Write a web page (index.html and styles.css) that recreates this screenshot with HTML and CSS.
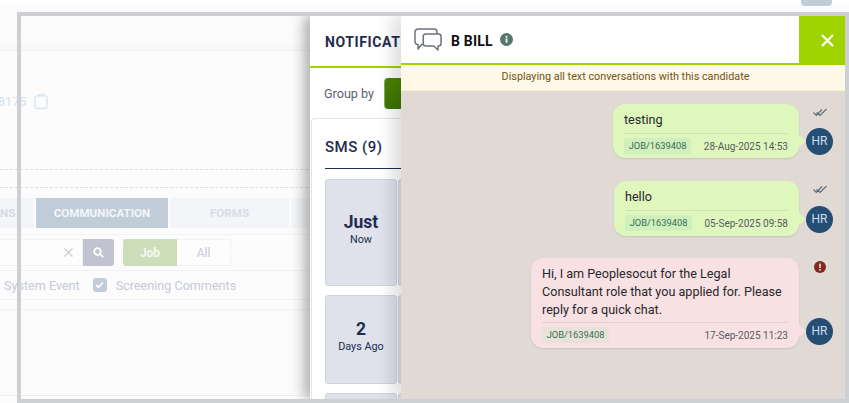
FILE: index.html
```html
<!DOCTYPE html>
<html lang="en">
<head>
<meta charset="utf-8">
<title>Communication</title>
<link rel="stylesheet" href="styles.css">
</head>
<body>
<div class="page">
  <div class="topbar"><span class="topbtn"></span></div>
  <div class="idrow">
    <span class="idnum">8175</span>
    <svg class="clip" width="14" height="15" viewBox="0 0 14 15" fill="none" stroke="#d3e2ee" stroke-width="1.2"><rect x="1" y="2" width="12" height="12.4" rx="1.5"/><path d="M4.5 2V.8h5V2" /></svg>
  </div>
  <div class="dash dash1"></div>
  <div class="dash dash2"></div>
  <div class="tabs">
    <span class="tab tab-first">NS</span>
    <span class="tab tab-active">COMMUNICATION</span>
    <span class="tab tab-forms">FORMS</span>
    <span class="tab tab-rest"></span>
  </div>
  <div class="searchrow">
    <div class="input">
      <svg width="9" height="9" viewBox="0 0 9 9" stroke="#c9cbd1" stroke-width="1.1"><path d="M.5.5l8 8M8.500.5l-8 8"/></svg>
    </div>
    <span class="searchbtn">
      <svg width="11" height="11" viewBox="0 0 11 11" fill="none" stroke="#fff" stroke-width="1.8"><circle cx="4.500" cy="4.500" r="3.300"/><path d="M7 7l3.200 3.200"/></svg>
    </span>
    <span class="seg seg-on">Job</span>
    <span class="seg seg-off">All</span>
  </div>
  <div class="checkrow">
    <span>System Event</span>
    <span class="check">
      <svg width="9" height="8" viewBox="0 0 9 8" fill="none" stroke="#fff" stroke-width="1.600"><path d="M1 4l2.400 2.400L8 1.500"/></svg>
    </span>
    <span>Screening Comments</span>
  </div>
  <div class="blankrow"></div>
</div>

<div class="modal">
  <section class="notif">
    <div class="notif-inner">
      <h2 class="notif-title">NOTIFICATIONS</h2>
      <div class="groupby"><span>Group by</span><span class="groupbtn"></span></div>
      <div class="smscard">
        <h3 class="smstitle">SMS (9)</h3>
        <div class="smslist">
          <div class="dayrow day-tall"><div class="day"><strong>Just</strong><span>Now</span></div><div class="day day-next"></div></div>
          <div class="dayrow day-mid"><div class="day"><strong>2</strong><span>Days Ago</span></div><div class="day day-next"></div></div>
          <div class="dayrow day-low"><div class="day"></div><div class="day day-next"></div></div>
        </div>
      </div>
    </div>
  </section>
  <section class="chat">
    <header class="chathead">
      <svg class="chaticon" width="28" height="26" viewBox="0 0 28 26" fill="none" stroke="#6d7282" stroke-width="1.500" stroke-linejoin="round">
        <path d="M9 16.500H7.500L4 21v-4.500H3.500A2.500 2.500 0 0 1 1 14V4a3 3 0 0 1 3-3h16a3 3 0 0 1 3 3v2"/>
        <path d="M12 6h12.500A2.500 2.500 0 0 1 27 8.500v7a2.500 2.500 0 0 1-2.500 2.500H24v4l-4.200-4H12a2.800 2.800 0 0 1-2.800-2.500V8.500A2.500 2.500 0 0 1 12 6z"/>
      </svg>
      <span class="name">B BILL</span>
      <svg class="info" width="13" height="13" viewBox="0 0 13 13"><circle cx="6.500" cy="6.500" r="6.500" fill="#527a6e"/><rect x="5.600" y="5.500" width="1.800" height="4.200" fill="#fff"/><circle cx="6.500" cy="3.800" r="1" fill="#fff"/></svg>
      <button class="close" type="button" aria-label="Close">
        <svg width="13" height="13" viewBox="0 0 13 13" stroke="#fff" stroke-width="2.200"><path d="M1 1l11 11M12 1L1 12"/></svg>
      </button>
    </header>
    <div class="banner">Displaying all text conversations with this candidate</div>
    <div class="thread">
      <article class="msg msg-a">
        <div class="bubble green">
          <p class="text">testing</p>
          <div class="meta"><span class="job">JOB/1639408</span><time>28-Aug-2025 14:53</time></div>
        </div>
        <div class="side">
          <svg class="ticks" width="14" height="9" viewBox="0 0 14 9" fill="none" stroke="#5f6b73" stroke-width="1.100"><path d="M.5 4.500l2.800 3L9 1.500M4.500 5l2.500 2.500 6.500-6.500M3.500 4.500l2 2"/></svg>
          <span class="avatar">HR</span>
        </div>
      </article>
      <article class="msg msg-b">
        <div class="bubble green">
          <p class="text">hello</p>
          <div class="meta"><span class="job">JOB/1639408</span><time>05-Sep-2025 09:58</time></div>
        </div>
        <div class="side">
          <svg class="ticks" width="14" height="9" viewBox="0 0 14 9" fill="none" stroke="#5f6b73" stroke-width="1.100"><path d="M.5 4.500l2.800 3L9 1.500M4.500 5l2.500 2.500 6.500-6.500M3.500 4.500l2 2"/></svg>
          <span class="avatar">HR</span>
        </div>
      </article>
      <article class="msg msg-c">
        <div class="bubble pink">
          <p class="text">Hi, I am Peoplesocut for the Legal Consultant role that you applied for. Please reply for a quick chat.</p>
          <div class="meta"><span class="job job-pink">JOB/1639408</span><time>17-Sep-2025 11:23</time></div>
        </div>
        <div class="side">
          <svg class="err" width="12" height="12" viewBox="0 0 12 12"><circle cx="6" cy="6" r="6" fill="#7f2a1e"/><rect x="5.200" y="2.500" width="1.600" height="4.500" fill="#f3dcd8"/><rect x="5.200" y="8" width="1.600" height="1.600" fill="#f3dcd8"/></svg>
          <span class="avatar">HR</span>
        </div>
      </article>
    </div>
  </section>
</div>
</body>
</html>
```

FILE: styles.css
```css
* { box-sizing: border-box; }
html, body { margin: 0; height: 100%; }
body {
  position: relative;
  width: 849px;
  height: 403px;
  overflow: hidden;
  background: #fcfcfd;
  font-family: Roboto, "Liberation Sans", sans-serif;
}
p, h2, h3 { margin: 0; }

/* faded page behind the modal */
.page { height: 403px; overflow: hidden; }
.topbar {
  height: 51px;
  background: linear-gradient(#ffffff 0, #fafafb 12px, #fcfcfd 16px, #fbfbfc 44px, #f7f8fa 45px);
  border-bottom: 1px solid #eef0f4;
  padding-left: 801px;
}
.topbtn {
  display: block;
  width: 31px;
  height: 6px;
  background: #c0cdd9;
  border-radius: 0 0 4px 4px;
}
.idrow {
  display: flex;
  align-items: center;
  gap: 8px;
  height: 15px;
  margin-top: 43px;
  margin-left: -2px;
  color: #d3e2ee;
  font-size: 12.6px;
}
.clip { flex: none; }
.dash { border-top: 1px dashed #dcdde0; }
.dash1 { margin-top: 60px; }
.dash2 { margin-top: 17px; }
.tabs {
  display: flex;
  gap: 2px;
  height: 30px;
  margin-top: 10px;
  font-size: 11.6px;
  font-weight: 700;
  color: #d9dde4;
}
.tab {
  display: flex;
  align-items: center;
  justify-content: center;
  background: #f4f5f8;
}
.tab-first { width: 34px; justify-content: flex-start; color: #d6dae1; }
.tab-active { width: 132px; background: #c0cdd9; color: #f3f6f9; }
.tab-forms { width: 119px; }
.tab-rest { width: 200px; }
.searchrow {
  display: flex;
  align-items: stretch;
  height: 37px;
  padding: 4px 0;
  margin-top: 6px;
  border-top: 1px solid #f2f3f5;
  border-bottom: 1px solid #f0f1f4;
}
.input {
  width: 83px;
  display: flex;
  align-items: center;
  justify-content: flex-end;
  padding-right: 9px;
  border: 1px solid #f2f3f5;
  border-left: 0;
  background: #fdfdfe;
}
.searchbtn {
  width: 31px;
  display: flex;
  align-items: center;
  justify-content: center;
  background: #c1c3d1;
  border-radius: 0 3px 3px 0;
  margin-right: 9px;
}
.seg {
  width: 54px;
  display: flex;
  align-items: center;
  justify-content: center;
  font-size: 12px;
}
.seg-on { background: #cddfba; color: #f4f8ef; font-weight: 700; border-radius: 3px 0 0 3px; }
.seg-off { background: #fdfdfe; color: #c9cbd2; border: 1px solid #f2f3f5; border-left: 0; border-radius: 0 3px 3px 0; }
.checkrow {
  display: flex;
  align-items: center;
  height: 29px;
  padding-left: 4px;
  font-size: 12.6px;
  color: #c7cad6;
  border-bottom: 1px solid #f2f3f5;
}
.check {
  width: 14px;
  height: 14px;
  margin: 0 9px 0 13px;
  display: flex;
  align-items: center;
  justify-content: center;
  background: #c3cdd9;
  border-radius: 3px;
}
.blankrow { height: 87px; margin-top: 9px; border-top: 1px solid #f2f3f5; border-bottom: 1px solid #eeeff2; background: #fbfbfb; }

/* modal window laid over the page */
.modal {
  position: absolute;
  left: 17px;
  top: 12px;
  right: 0;
  bottom: 0;
  display: flex;
  justify-content: flex-end;
  border: 4px solid #cdcfd2;
  overflow: hidden;
  isolation: isolate;
}
.notif {
  width: 91px;
  background: #fff;
  overflow: hidden;
  box-shadow: -6px 0 12px rgba(0, 0, 0, .3);
  position: relative;
}
.notif-inner { width: 300px; }
.notif-title {
  height: 52px;
  padding: 17px 0 0 15px;
  font-size: 14px;
  line-height: 18px;
  font-weight: 700;
  letter-spacing: .6px;
  color: #222c4f;
  border-bottom: 2px solid #a0d300;
}
.groupby {
  display: flex;
  align-items: center;
  gap: 10px;
  height: 50px;
  padding: 0 0 0 14px;
  font-size: 12.6px;
  color: #5a5f73;
}
.groupbtn {
  width: 100px;
  height: 31px;
  background: linear-gradient(#4b8500, #3d7400);
  border-radius: 4px;
  border-left: 1px solid #8aa868;
}
.smscard {
  margin-left: 1px;
  padding: 0 0 0 13px;
  height: 300px;
  border: 1px solid #e2e4ec;
  border-right: 0;
  border-radius: 4px 0 0 0;
}
.smstitle {
  height: 50px;
  padding-top: 18px;
  width: 200px;
  font-size: 15px;
  line-height: 20px;
  font-weight: 500;
  color: #222c4f;
  letter-spacing: .5px;
  border-bottom: 1px solid #222c4f;
}
.smslist { display: flex; flex-direction: column; gap: 9px; margin-top: 10px; }
.dayrow { display: flex; gap: 1px; }
.day {
  width: 72px;
  background: #dfe2eb;
  border: 1px solid #d0d4dd;
  border-radius: 3px;
  color: #222c4f;
  display: flex;
  flex-direction: column;
  align-items: center;
  font-size: 10.8px;
  line-height: 14px;
}
.day-next { width: 60px; }
.day strong { font-size: 17.5px; line-height: 22px; font-weight: 700; }
.day-tall { height: 107px; }
.day-tall .day:first-child { padding-top: 31px; }
.day-mid { height: 89px; }
.day-mid .day:first-child { padding-top: 22px; }
.day-low { height: 60px; }

.chat {
  width: 444px;
  flex: none;
  display: flex;
  flex-direction: column;
  background: #e0d9d4;
  position: relative;
  box-shadow: -10px 0 14px rgba(0, 0, 0, .12);
}
.chathead {
  display: flex;
  align-items: flex-start;
  height: 49px;
  padding: 12px 0 0 13px;
  background: #fff;
  border-bottom: 2px solid #a0d300;
}
.chaticon { flex: none; }
.name {
  margin: 5px 0 0 9px;
  font-size: 14px;
  line-height: 17px;
  font-weight: 700;
  color: #111;
  letter-spacing: .2px;
}
.info { margin: 5px 0 0 7px; }
.close {
  margin: -12px 0 -2px auto;
  width: 46px;
  height: 49px;
  border: 0;
  padding: 0 0 0 10px;
  background: #a0d300;
  display: flex;
  align-items: center;
  justify-content: center;
}
.banner {
  height: 26px;
  padding-left: 5px;
  text-align: center;
  line-height: 24px;
  font-size: 10.8px;
  color: #73521a;
  background: #fdf9e6;
  border-bottom: 1px solid #f7efc6;
}
.thread {
  flex: 1;
  display: flex;
  flex-direction: column;
  align-items: flex-end;
  padding: 13px 12px 0 0;
  overflow: hidden;
}
.msg { display: flex; gap: 7px; align-items: stretch; }
.msg-b { margin-top: 23px; }
.msg-c { margin-top: 22px; }
.bubble {
  position: relative;
  padding: 7px 11px 4px;
  border-radius: 12px;
  box-shadow: 0 1px 2px rgba(0, 0, 0, .1);
}
.msg-b .bubble, .msg-c .bubble { padding-bottom: 5px; }
.bubble::after {
  content: "";
  position: absolute;
  right: -7px;
  bottom: 11px;
  border-style: solid;
  border-width: 6px 0 6px 7px;
  border-color: transparent;
}
.green { width: 186px; background: #dff6bd; }
.msg-b .green { width: 185px; }
.pink { width: 268px; background: #f8e1e3; }
.green::after { border-left-color: #dff6bd; }
.pink::after { border-left-color: #f8e1e3; }
.text {
  font-size: 12.6px;
  line-height: 18px;
  color: #26282c;
  padding-bottom: 4px;
  border-bottom: 1px solid rgba(0, 0, 0, .07);
}
.msg-c .text { padding-bottom: 3px; }
.meta {
  display: flex;
  align-items: center;
  justify-content: space-between;
  margin-top: 4px;
  font-size: 10px;
  color: #565c5f;
}
.job {
  width: 67px;
  height: 16px;
  line-height: 16px;
  text-align: center;
  border-radius: 3px;
  font-size: 9.3px;
  color: #3d6b57;
  background: #cff0bc;
}
.job-pink { background: #e6e4d8; }
.side {
  width: 27px;
  display: flex;
  flex-direction: column;
  align-items: center;
  justify-content: space-between;
  padding-bottom: 3px;
}
.ticks { margin-top: 4px; }
.err { margin-top: 3px; }
.avatar {
  width: 27px;
  height: 27px;
  border-radius: 50%;
  background: #244e74;
  color: #cfdde9;
  font-size: 12px;
  line-height: 27px;
  text-align: center;
}
```
